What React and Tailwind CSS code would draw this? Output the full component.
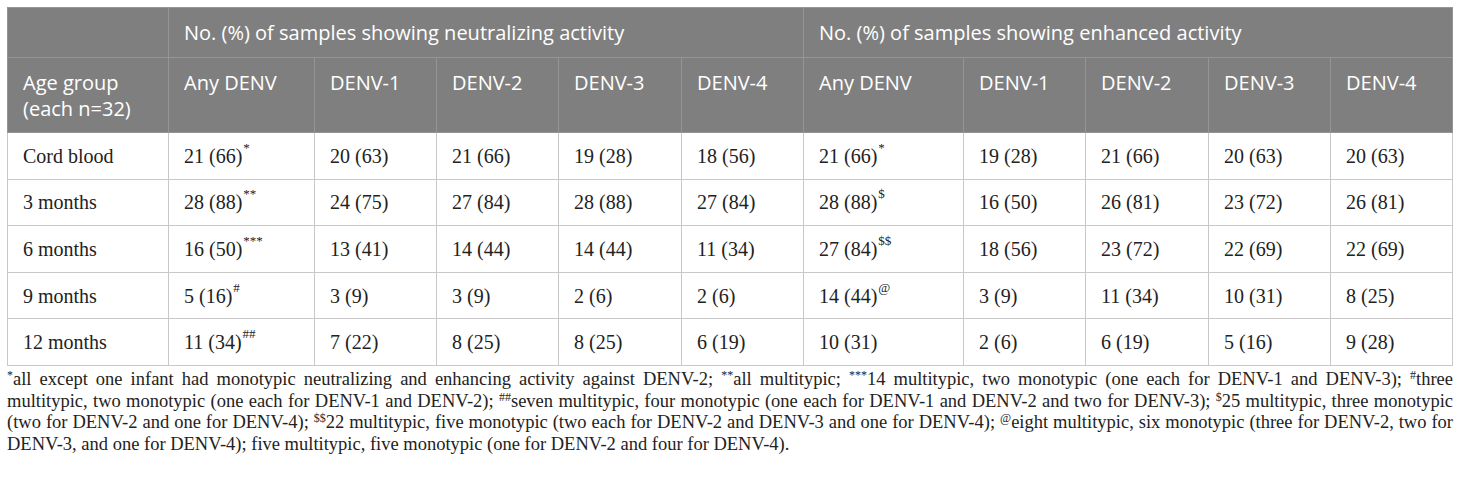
// Antibody activity table with footnotes

const COLS = [161, 146, 122, 122, 123, 122, 160, 122, 123, 122, 122];

const SUB_HEADERS = ["Any DENV", "DENV-1", "DENV-2", "DENV-3", "DENV-4"];

const ROWS = [
  { age: "Cord blood", cells: [["21 (66)", "*"], "20 (63)", "21 (66)", "19 (28)", "18 (56)", ["21 (66)", "*"], "19 (28)", "21 (66)", "20 (63)", "20 (63)"] },
  { age: "3 months", cells: [["28 (88)", "**"], "24 (75)", "27 (84)", "28 (88)", "27 (84)", ["28 (88)", "$"], "16 (50)", "26 (81)", "23 (72)", "26 (81)"] },
  { age: "6 months", cells: [["16 (50)", "***"], "13 (41)", "14 (44)", "14 (44)", "11 (34)", ["27 (84)", "$$"], "18 (56)", "23 (72)", "22 (69)", "22 (69)"] },
  { age: "9 months", cells: [["5 (16)", "#"], "3 (9)", "3 (9)", "2 (6)", "2 (6)", ["14 (44)", "@"], "3 (9)", "11 (34)", "10 (31)", "8 (25)"] },
  { age: "12 months", cells: [["11 (34)", "##"], "7 (22)", "8 (25)", "8 (25)", "6 (19)", "10 (31)", "2 (6)", "6 (19)", "5 (16)", "9 (28)"] },
];

const sans = "font-['Open_Sans',sans-serif]";

function Cell({ value }) {
  if (Array.isArray(value)) {
    const [text, mark] = value;
    return (
      <>
        {text}
        <span className="text-[13px] leading-none align-top ml-[1px]">{mark}</span>
      </>
    );
  }
  return value;
}

function Sup({ children }) {
  return <span className="text-[12px] leading-none align-top">{children}</span>;
}

export default function App() {
  return (
    <div className="bg-white w-[1460px] h-[477px] px-[7px] pt-[7px] font-['Liberation_Serif',serif] text-[#222]">
      <table className="border-collapse table-fixed w-[1445px] border border-[#c8c8c8]">
        <colgroup>
          {COLS.map((w, i) => (
            <col key={i} style={{ width: w }} />
          ))}
        </colgroup>
        <thead className={`bg-[#7f7f7f] text-white ${sans} text-[20px] leading-[26px]`}>
          <tr className="h-[50px]">
            <th className="border border-[#959595]" />
            <th colSpan={5} className="border border-[#959595] px-[15px] text-left font-normal">
              No. (%) of samples showing neutralizing activity
            </th>
            <th colSpan={5} className="border border-[#959595] px-[15px] text-left font-normal">
              No. (%) of samples showing enhanced activity
            </th>
          </tr>
          <tr className="h-[75px]">
            <th className="border border-[#959595] px-[15px] pt-[12px] align-top text-left font-normal">
              Age group
              <br />
              (each n=32)
            </th>
            {[...SUB_HEADERS, ...SUB_HEADERS].map((h, i) => (
              <th key={i} className="border border-[#959595] px-[15px] pt-[12px] align-top text-left font-normal">
                {h}
              </th>
            ))}
          </tr>
        </thead>
        <tbody className="text-[20px]">
          {ROWS.map((r) => (
            <tr key={r.age} className="h-[46.6px]">
              <td className="border border-[#c8c8c8] px-[15px]">{r.age}</td>
              {r.cells.map((c, i) => (
                <td key={i} className="border border-[#c8c8c8] px-[15px]">
                  <Cell value={c} />
                </td>
              ))}
            </tr>
          ))}
        </tbody>
      </table>
      <p className="mt-[3px] text-[18.5px] leading-[21.7px] text-justify text-[#222]">
        <Sup>*</Sup>all except one infant had monotypic neutralizing and enhancing activity against DENV-2; <Sup>**</Sup>all
        multitypic; <Sup>***</Sup>14 multitypic, two monotypic (one each for DENV-1 and DENV-3); <Sup>#</Sup>three multitypic,
        two monotypic (one each for DENV-1 and DENV-2); <Sup>##</Sup>seven multitypic, four monotypic (one each for DENV-1 and
        DENV-2 and two for DENV-3); <Sup>$</Sup>25 multitypic, three monotypic (two for DENV-2 and one for DENV-4);{" "}
        <Sup>$$</Sup>22 multitypic, five monotypic (two each for DENV-2 and DENV-3 and one for DENV-4); <Sup>@</Sup>eight
        multitypic, six monotypic (three for DENV-2, two for DENV-3, and one for DENV-4); five multitypic, five monotypic (one
        for DENV-2 and four for DENV-4).
      </p>
    </div>
  );
}
